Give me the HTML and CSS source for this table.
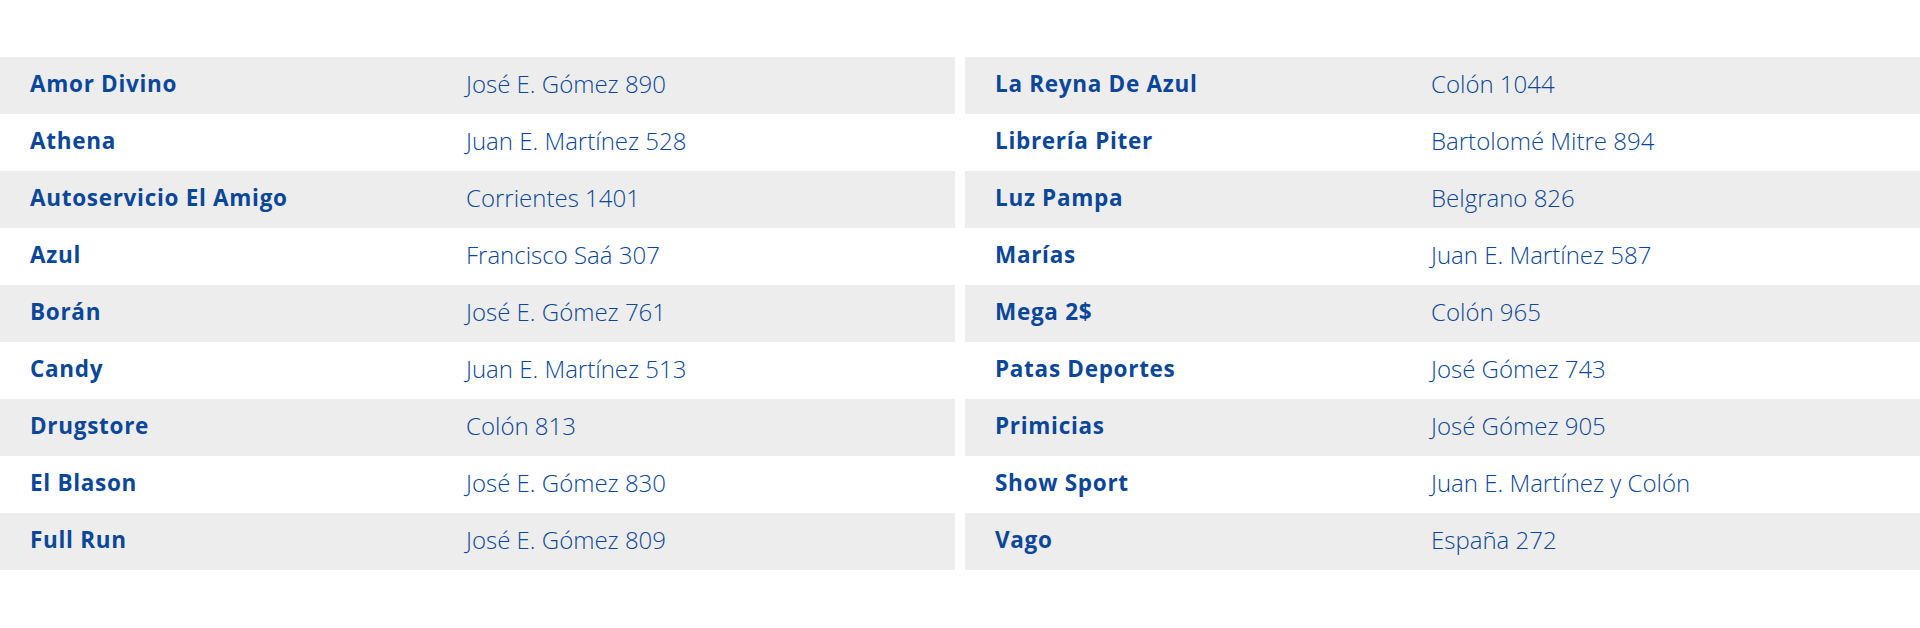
FILE: index.html
```html
<!DOCTYPE html>
<html lang="es">
<head>
<meta charset="utf-8">
<title>Comercios</title>
<link rel="stylesheet" href="styles.css">
</head>
<body>
<div class="lists">
  <table class="list">
    <tbody>
      <tr><td class="name">Amor Divino</td><td class="addr">José E. Gómez 890</td></tr>
      <tr><td class="name">Athena</td><td class="addr">Juan E. Martínez 528</td></tr>
      <tr><td class="name">Autoservicio El Amigo</td><td class="addr">Corrientes 1401</td></tr>
      <tr><td class="name">Azul</td><td class="addr">Francisco Saá 307</td></tr>
      <tr><td class="name">Borán</td><td class="addr">José E. Gómez 761</td></tr>
      <tr><td class="name">Candy</td><td class="addr">Juan E. Martínez 513</td></tr>
      <tr><td class="name">Drugstore</td><td class="addr">Colón 813</td></tr>
      <tr><td class="name">El Blason</td><td class="addr">José E. Gómez 830</td></tr>
      <tr><td class="name">Full Run</td><td class="addr">José E. Gómez 809</td></tr>
    </tbody>
  </table>
  <table class="list">
    <tbody>
      <tr><td class="name">La Reyna De Azul</td><td class="addr">Colón 1044</td></tr>
      <tr><td class="name">Librería Piter</td><td class="addr">Bartolomé Mitre 894</td></tr>
      <tr><td class="name">Luz Pampa</td><td class="addr">Belgrano 826</td></tr>
      <tr><td class="name">Marías</td><td class="addr">Juan E. Martínez 587</td></tr>
      <tr><td class="name">Mega 2$</td><td class="addr">Colón 965</td></tr>
      <tr><td class="name">Patas Deportes</td><td class="addr">José Gómez 743</td></tr>
      <tr><td class="name">Primicias</td><td class="addr">José Gómez 905</td></tr>
      <tr><td class="name">Show Sport</td><td class="addr">Juan E. Martínez y Colón</td></tr>
      <tr><td class="name">Vago</td><td class="addr">España 272</td></tr>
    </tbody>
  </table>
</div>
</body>
</html>
```
FILE: styles.css
```css
html, body {
  margin: 0;
  padding: 0;
  background: #ffffff;
}

body {
  font-family: "Open Sans", "Noto Sans", sans-serif;
  color: #0b4799;
}

.lists {
  display: flex;
  gap: 10px;
  padding-top: 57px;
}

.list {
  flex: 1 1 0;
  width: 955px;
  border-collapse: collapse;
  table-layout: fixed;
}

.list tr {
  height: 57px;
}

.list tr:nth-child(odd) {
  background: #ededed;
}

.list td {
  padding: 0 0 4px 0;
  vertical-align: middle;
  white-space: nowrap;
}

.list td.name {
  width: 436px;
  padding-left: 30px;
  font-weight: 700;
  font-size: 22.5px;
  letter-spacing: 0.7px;
}

.list td.addr {
  font-weight: 300;
  font-size: 24px;
}
```
